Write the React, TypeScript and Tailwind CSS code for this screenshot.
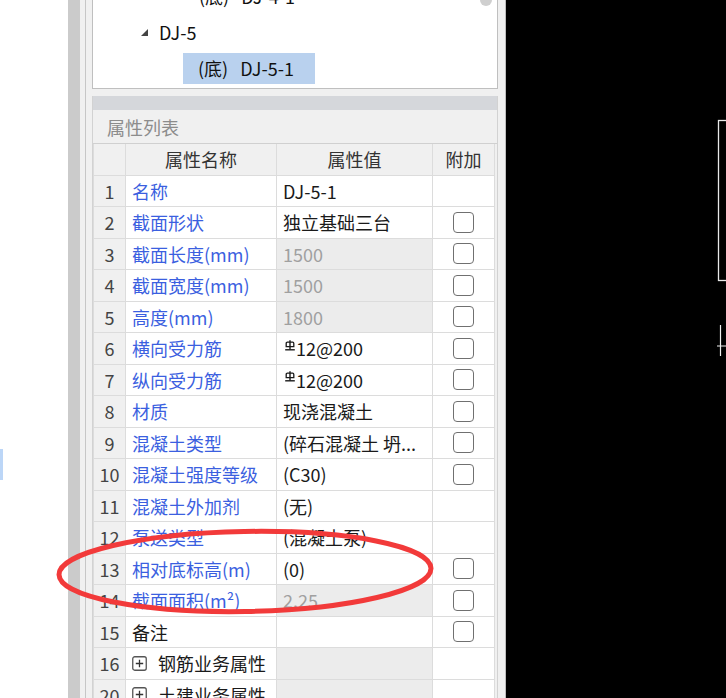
import React from "react";

type Row = {
  n: string;
  name: string;
  value?: string;
  gray?: boolean;
  cb?: boolean;
  black?: boolean;
  plus?: boolean;
  rebar?: boolean;
};

const rows: Row[] = [
  { n: "1", name: "名称", value: "DJ-5-1" },
  { n: "2", name: "截面形状", value: "独立基础三台", cb: true },
  { n: "3", name: "截面长度(mm)", value: "1500", gray: true, cb: true },
  { n: "4", name: "截面宽度(mm)", value: "1500", gray: true, cb: true },
  { n: "5", name: "高度(mm)", value: "1800", gray: true, cb: true },
  { n: "6", name: "横向受力筋", value: "12@200", rebar: true, cb: true },
  { n: "7", name: "纵向受力筋", value: "12@200", rebar: true, cb: true },
  { n: "8", name: "材质", value: "现浇混凝土", cb: true },
  { n: "9", name: "混凝土类型", value: "(碎石混凝土 坍...", cb: true },
  { n: "10", name: "混凝土强度等级", value: "(C30)", cb: true },
  { n: "11", name: "混凝土外加剂", value: "(无)" },
  { n: "12", name: "泵送类型", value: "(混凝土泵)" },
  { n: "13", name: "相对底标高(m)", value: "(0)", cb: true },
  { n: "14", name: "截面面积(m²)", value: "2.25", gray: true, cb: true },
  { n: "15", name: "备注", value: "", black: true, cb: true },
  { n: "16", name: "钢筋业务属性", gray: true, black: true, plus: true },
  { n: "20", name: "土建业务属性", gray: true, black: true, plus: true },
];

function Rebar() {
  return (
    <svg width="10" height="11" viewBox="0 0 10 11" className="ml-[2px] mr-[1px] -mt-[6px] shrink-0">
      <path d="M5 0.3 V9.5" stroke="#1a1a1a" strokeWidth="1.4" fill="none" />
      <path d="M1.2 6.6 V3.4 Q1.2 2.2 2.4 2.2 H7.6 Q8.8 2.2 8.8 3.4 V6.6 Z" stroke="#1a1a1a" strokeWidth="1.3" fill="none" />
      <path d="M0.2 9.8 H9.8" stroke="#1a1a1a" strokeWidth="1.4" fill="none" />
    </svg>
  );
}

function PlusBox() {
  return (
    <svg width="15" height="15" viewBox="0 0 15 15" className="mr-[11px] shrink-0">
      <rect x="0.75" y="0.75" width="13.5" height="13.5" rx="2" stroke="#555" strokeWidth="1.3" fill="none" />
      <path d="M7.5 3.8 V11.2 M3.8 7.5 H11.2" stroke="#333" strokeWidth="1.3" />
    </svg>
  );
}

function Checkbox() {
  return <div className="h-[21px] w-[21px] rounded-[4px] border-[1.5px] border-[#707070] bg-white" />;
}

const cell = "flex h-[31.5px] items-center border-b border-r border-[#dcdcdc]";

export default function App() {
  return (
    <div
      className="relative flex h-[698px] w-[726px] overflow-hidden bg-white text-[18px] leading-none"
      style={{ fontFamily: "'Noto Sans CJK SC', 'Noto Sans', sans-serif" }}
    >
      {/* left white strip */}
      <div className="w-[68px] shrink-0 bg-white pt-[449px]">
        <div className="h-[31px] w-[3px] bg-[#bcd6f7]" />
      </div>
      <div className="w-[12px] shrink-0 bg-[#cbcbcb]" />
      <div className="w-[5px] shrink-0 bg-[#f0f0f0]" />
      <div className="w-[1px] shrink-0 bg-[#c6c6c6]" />

      {/* main panel */}
      <div className="flex w-[419px] shrink-0 flex-col bg-[#f0f0f0] pl-[6px] pr-[7px]">
        {/* tree */}
        <div className="relative -mt-[23px] flex h-[112px] shrink-0 flex-col border border-[#bfbfbf] bg-white text-[#111]">
          <div className="flex h-[36px] items-center pl-[106px]">
            (底)<span className="ml-[12px]">DJ-4-1</span>
          </div>
          <div className="flex h-[36px] items-center pl-[48px]">
            <svg width="7" height="7" viewBox="0 0 7 7" className="mr-[11px]">
              <polygon points="7,0 7,7 0,7" fill="#444" />
            </svg>
            DJ-5
          </div>
          <div className="flex h-[36px] items-center pl-[90px]">
            <div className="flex h-[31px] w-[132px] items-center bg-[#b9d1ee] pl-[15px]">
              (底)<span className="ml-[12px]">DJ-5-1</span>
            </div>
          </div>
          <div className="absolute right-[5px] top-[16px] h-[12px] w-[12px] rounded-full bg-[#cfcfcf]" />
        </div>

        <div className="h-[7px] shrink-0" />

        {/* property panel */}
        <div className="flex flex-1 flex-col border-l border-r border-[#d2d2d2]">
          <div className="h-[14px] shrink-0 bg-[#d5d7db]" />
          <div className="flex h-[34px] shrink-0 items-center border-b border-[#d0d0d0] pl-[14px] text-[#8c8c8c]">
            属性列表
          </div>
          <div className="grid grid-cols-[33px_151px_156px_62px]">
            <div className={`${cell} border-l bg-[#f0f0f0]`} />
            <div className={`${cell} justify-center bg-[#f0f0f0] text-[#333]`}>属性名称</div>
            <div className={`${cell} justify-center bg-[#f0f0f0] text-[#333]`}>属性值</div>
            <div className={`${cell} justify-center bg-[#f0f0f0] text-[#333]`}>附加</div>
            {rows.map((r) => (
              <React.Fragment key={r.n}>
                <div className={`${cell} justify-center border-l bg-[#f0f0f0] text-[#444]`}>{r.n}</div>
                <div
                  className={`${cell} bg-white pl-[6px] ${r.black ? "text-[#1a1a1a]" : "text-[#3b5fe0]"}`}
                >
                  {r.plus && <PlusBox />}
                  {r.name}
                </div>
                <div
                  className={`${cell} whitespace-nowrap pl-[6px] ${
                    r.gray ? "bg-[#ececec] text-[#a0a0a0]" : "bg-white text-[#1a1a1a]"
                  }`}
                >
                  {r.rebar && <Rebar />}
                  {r.value}
                </div>
                <div className={`${cell} justify-center bg-white`}>{r.cb && <Checkbox />}</div>
              </React.Fragment>
            ))}
          </div>
        </div>
      </div>

      {/* drawing canvas */}
      <div className="relative flex-1 border-l border-[#bdbdbd] bg-black">
        <svg className="absolute inset-0" width="221" height="698" viewBox="0 0 221 698">
          <rect x="212.5" y="120.5" width="40" height="160" stroke="#e8e8e8" strokeWidth="1.3" fill="none" />
          <path d="M214.5 325 V356" stroke="#f0f0f0" strokeWidth="1.2" />
          <path d="M211 346 H221" stroke="#f0f0f0" strokeWidth="1" />
        </svg>
      </div>

      {/* red annotation ellipse */}
      <svg className="pointer-events-none absolute left-0 top-0" width="726" height="698" viewBox="0 0 726 698">
        <ellipse
          cx="245"
          cy="571.5"
          rx="186"
          ry="40"
          transform="rotate(-1 245 571.5)"
          stroke="#f23a3a"
          strokeWidth="5"
          fill="none"
        />
      </svg>
    </div>
  );
}
